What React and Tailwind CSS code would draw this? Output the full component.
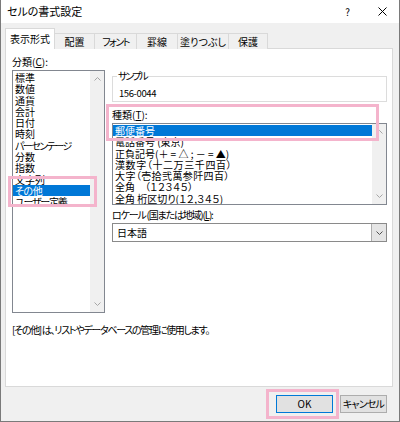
import React from 'react';

const categories = [
  { label: '標準' },
  { label: '数値' },
  { label: '通貨' },
  { label: '会計' },
  { label: '日付' },
  { label: '時刻' },
  { label: 'パーセンテージ', cls: 'tracking-[-1.5px]' },
  { label: '分数' },
  { label: '指数' },
  { label: '文字列' },
  { label: 'その他', cls: 'tracking-[-0.5px]' },
  { label: 'ユーザー定義', cls: 'tracking-[-1.2px]' },
];

const types = [
  { label: '郵便番号' },
  { label: '電話番号 (東京)' },
  { label: '正負記号(＋ = △ ; － = ▲)' },
  { label: '漢数字（十二万三千四百）', cls: 'tracking-[0.6px]' },
  { label: '大字（壱拾弐萬参阡四百）', cls: 'tracking-[0.4px]' },
  { label: '全角　（１２３４５）' },
  { label: '全角 桁区切り(１２,３４５)' },
];

const tabs = [
  { label: '表示形式', w: 'w-[50px]' },
  { label: '配置', w: 'w-[41px]' },
  { label: 'フォント', w: 'w-[43px] tracking-[-1.5px]' },
  { label: '罫線', w: 'w-[42px]' },
  { label: '塗りつぶし', w: 'w-[52px]' },
  { label: '保護', w: 'w-[40px]' },
];

const Chevron = ({ up, color = '#a6a6a6' }) => (
  <svg width="7" height="4" viewBox="0 0 7 4" className="block">
    <path
      d={up ? 'M0.5 3.5L3.5 0.5L6.5 3.5' : 'M0.5 0.5L3.5 3.5L6.5 0.5'}
      fill="none"
      stroke={color}
      strokeWidth="1"
    />
  </svg>
);

const Scrollbar = () => (
  <div className="flex w-[14px] flex-col items-center justify-between bg-[#f0f0f0] py-[6px]">
    <Chevron up />
    <Chevron />
  </div>
);

const ListBox = ({ items, selected, height }) => (
  <div className={`flex ${height} border border-[#828790] bg-white`}>
    <div className="flex-1 overflow-hidden pt-px">
      {items.map((item, i) => (
        <div
          key={item.label}
          className={`h-[11.3px] whitespace-nowrap pl-[2px] leading-[11.3px] ${item.cls || ''} ${
            i === selected ? 'bg-[#0078d7] text-white' : 'text-black'
          }`}
        >
          {item.label}
        </div>
      ))}
    </div>
    <Scrollbar />
  </div>
);

const App = () => {
  return (
    <div className="relative flex h-[422px] w-[400px] flex-col border-x border-b border-[#7a7a7a] bg-[#f0f0f0] text-[10px] text-black font-['Noto_Sans_CJK_JP',sans-serif] [font-feature-settings:'palt']">
      {/* title bar */}
      <div className="flex h-[23px] items-center bg-white pl-[6px]">
        <span className="text-[11px] leading-none">セルの書式設定</span>
        <div className="ml-auto flex h-full">
          <div className="flex w-[35px] items-center justify-center text-[10px]">?</div>
          <div className="flex w-[34px] items-center justify-center">
            <svg width="9" height="9" viewBox="0 0 9 9">
              <path d="M0.5 0.5L8.5 8.5M8.5 0.5L0.5 8.5" stroke="#000" strokeWidth="1" />
            </svg>
          </div>
        </div>
      </div>

      <div className="flex flex-1 flex-col pl-[4px] pr-[6px] pt-[5px]">
        {/* tabs */}
        <div className="relative z-10 flex h-[21px] items-end">
          {tabs.map((t, i) =>
            i === 0 ? (
              <div
                key={t.label}
                className={`${t.w} h-[21px] border-x border-t border-[#d9d9d9] bg-white pt-[4px] text-center leading-[12px]`}
              >
                {t.label}
              </div>
            ) : (
              <div
                key={t.label}
                className={`${t.w} -ml-px flex h-[16px] items-center justify-center border-x border-t border-[#d9d9d9] bg-[#f0f0f0] leading-[12px]`}
              >
                {t.label}
              </div>
            )
          )}
        </div>

        {/* panel */}
        <div className="-mt-px h-[339px] border border-[#d9d9d9] bg-white pl-[6px] pt-[7px]">
          <div className="mb-[2px] h-[12px] leading-[12px]">
            分類(<span className="underline">C</span>):
          </div>
          <div className="flex">
            <div className="w-[93px]">
              <ListBox items={categories} selected={10} height="h-[243px]" />
            </div>
            <div className="ml-[7px] w-[275px]">
              <fieldset className="border border-[#dcdcdc] px-[6px]">
                <legend className="ml-[-2px] px-[1px] leading-[12px] tracking-[-2px]">サンプル</legend>
                <div className="pb-[2px] pt-[5px] text-[9.5px] leading-[12px] tracking-[-0.4px]">156-0044</div>
              </fieldset>
              <div className="mt-[7px] h-[12px] leading-[12px]">
                種類(<span className="underline">T</span>):
              </div>
              <div className="mt-[2px]">
                <ListBox items={types} selected={0} height="h-[82px]" />
              </div>
              <div className="mt-[4px] h-[12px] whitespace-nowrap leading-[12px] tracking-[-1.2px]">
                ロケール (国または地域)(<span className="underline">L</span>):
              </div>
              <div className="mt-[2px] flex h-[19px] border border-[#8a8a8a] bg-white">
                <div className="flex flex-1 items-center pl-[4px] leading-[12px]">日本語</div>
                <div className="flex w-[15px] items-center justify-center border-l border-[#adadad] bg-[#e5e5e5]">
                  <Chevron color="#505050" />
                </div>
              </div>
            </div>
          </div>
          <div className="mt-[11px] whitespace-nowrap leading-[12px] tracking-[-1.3px]">
            [その他] は、リストやデータベースの管理に使用します。
          </div>
        </div>

        {/* buttons */}
        <div className="mt-[8px] flex justify-end gap-[7px] pr-[6px]">
          <div className="flex h-[18px] w-[57px] items-center justify-center border border-[#0078d7] bg-[#e1e1e1] leading-none">
            OK
          </div>
          <div className="flex h-[18px] w-[47px] items-center justify-center whitespace-nowrap border border-[#adadad] bg-[#e1e1e1] leading-none tracking-[-0.8px]">
            キャンセル
          </div>
        </div>
      </div>

      {/* annotation highlights */}
      <div className="pointer-events-none absolute left-[7px] top-[176px] h-[31px] w-[89px] border-[3px] border-[#f4b4cc]" />
      <div className="pointer-events-none absolute left-[105px] top-[104px] h-[37px] w-[273px] border-[3px] border-[#f4b4cc]" />
      <div className="pointer-events-none absolute left-[265px] top-[389px] h-[30px] w-[73px] border-[3px] border-[#f4b4cc]" />
    </div>
  );
};

export default App;
